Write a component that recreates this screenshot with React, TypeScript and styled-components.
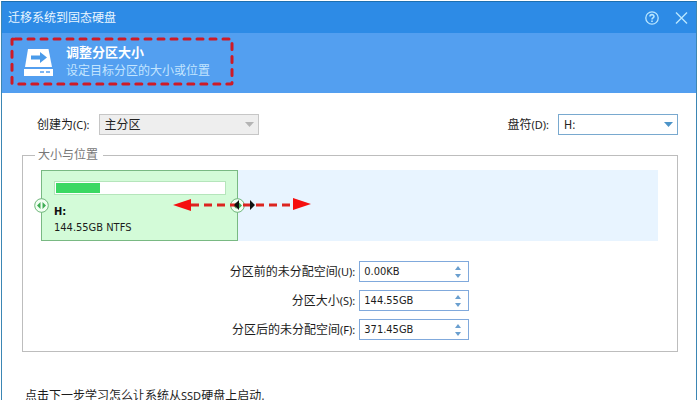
import React from "react";
import styled, { createGlobalStyle } from "styled-components";

const GlobalStyle = createGlobalStyle`
  *, *::before, *::after { box-sizing: border-box; }
  body {
    margin: 0;
    overflow: hidden;
    background: #fff;
    color: #1c1c1c;
    font: 12px/16px "DejaVu Sans Condensed", "Noto Sans CJK SC", sans-serif;
  }
  button, input, select { font: inherit; color: inherit; }
`;

const Dialog = styled.main`
  display: flex;
  flex-direction: column;
  min-height: 100vh;
  margin: 0 2px 0 1px;
  padding-top: 1px;
`;

const Frame = styled.div`
  flex: 1;
  border: 1px solid #3b86b4;
  border-top-color: #1d6fb0;
  border-bottom: 0;
`;

const TitleBar = styled.header`
  display: flex;
  align-items: center;
  justify-content: space-between;
  height: 31px;
  padding: 0 8px 0 6px;
  background: #2d8be6;
  color: #e8f5ff;
`;

const Title = styled.h1`
  margin: 0;
  font-size: 12px;
  font-weight: 400;
`;

const WindowActions = styled.div`
  display: flex;
  gap: 16px;
`;

const IconButton = styled.button`
  display: flex;
  padding: 0;
  border: 0;
  background: none;
  color: #b9e6ff;
`;

const StepButton = styled(IconButton)`
  color: #6a9fcf;
`;

const Banner = styled.section`
  display: flex;
  height: 60px;
  padding: 4px 8px;
  background: #539ff0;
  color: #fff;
`;

const Callout = styled.div`
  position: relative;
  display: flex;
  align-items: center;
  gap: 13px;
  width: 224px;
  height: 50px;
  padding-left: 14px;
`;

const CalloutOutline = styled.svg`
  position: absolute;
  inset: 0;
  pointer-events: none;
`;

const BannerTitle = styled.h2`
  margin: 0;
  font-size: 13px;
  line-height: 18px;
  font-weight: 700;
`;

const BannerText = styled.p`
  margin: 0;
  line-height: 18px;
  color: #c3e5ff;
`;

const Content = styled.div`
  padding: 21px 18px 0 20px;
`;

const Options = styled.div`
  display: flex;
  justify-content: space-between;
  padding-left: 15px;
`;

const Option = styled.div`
  display: flex;
  align-items: center;
  gap: 9px;
`;

const Latin = styled.span`
  font-family: "Noto Sans", sans-serif;
  font-size: 11px;
`;

const SelectBox = styled.div<{ $muted?: boolean }>`
  display: grid;
  align-items: center;
  width: ${(p) => (p.$muted ? "160px" : "120px")};
  color: ${(p) => (p.$muted ? "#b4b4b4" : "#4c94c8")};
  > * { grid-area: 1 / 1; }
  > svg { justify-self: end; margin-right: 5px; pointer-events: none; }
`;

const Select = styled.select<{ $muted?: boolean }>`
  appearance: none;
  height: 21px;
  width: 100%;
  padding: 0 20px 0 5px;
  border: 1px solid ${(p) => (p.$muted ? "#c6c6c6" : "#79a9cf")};
  border-radius: 0;
  background: ${(p) => (p.$muted ? "#eee" : "#fff")};
  color: #222;
  opacity: 1;
`;

const Group = styled.fieldset`
  min-width: 0;
  margin: 12px 0 0;
  padding: 7px 19px 11px 18px;
  border: 1px solid #bdbdbd;
`;

const Legend = styled.legend`
  margin-left: -6px;
  padding: 0 5px 0 3px;
  color: #777;
`;

const Disk = styled.div`
  position: relative;
  height: 71px;
  background: #e8f4ff;
`;

const Partition = styled.div`
  position: relative;
  width: 32%;
  height: 100%;
  padding: 10px 11px 0 12px;
  border: 1px solid #79b983;
  background: #d3fbd8;
  font-size: 11px;
`;

const Usage = styled.div`
  height: 14px;
  padding: 1px;
  border: 1px solid #b5e5bb;
  background: #fff;
`;

const Used = styled.div`
  width: 26%;
  height: 100%;
  background: #3bd863;
`;

const DriveName = styled.strong`
  display: block;
  margin-top: 9px;
  color: #111;
`;

const Handle = styled.button<{ $side: "left" | "right" }>`
  position: absolute;
  top: 27px;
  ${(p) => p.$side}: -8px;
  display: flex;
  padding: 0;
  border: 0;
  background: none;
`;

const ResizeHint = styled.svg`
  position: absolute;
  top: 26px;
  right: -74px;
  z-index: 1;
  pointer-events: none;
`;

const Sizes = styled.div`
  display: grid;
  grid-template-columns: auto 110px;
  justify-content: center;
  align-items: center;
  column-gap: 4px;
  row-gap: 8px;
  margin-top: 20px;
`;

const SizeLabel = styled.label`
  text-align: right;
`;

const Spin = styled.div`
  display: flex;
  height: 21px;
  border: 1px solid #80a9dc;
  background: #fff;
`;

const SpinInput = styled.input`
  flex: 1;
  min-width: 0;
  padding: 0 0 0 4px;
  border: 0;
  outline: 0;
  background: none;
  font-size: 11px;
`;

const SpinButtons = styled.div`
  display: flex;
  flex-direction: column;
  justify-content: center;
  gap: 4px;
  padding-right: 7px;
`;

const Note = styled.p`
  margin: 36px 0 0 3px;
  white-space: nowrap;
`;

const Triangle = ({ up, w = 6, h = 4 }: { up?: boolean; w?: number; h?: number }) => (
  <svg width={w} height={h} viewBox="0 0 10 10" preserveAspectRatio="none" fill="currentColor" aria-hidden="true">
    <path d={up ? "M0 10L5 0L10 10Z" : "M0 0H10L5 10Z"} />
  </svg>
);

const DiskIcon = () => (
  <svg width="29" height="27" viewBox="0 0 29 27" aria-hidden="true">
    <path d="M4 0H24.500L28 18H1Z" fill="#fff" />
    <path d="M7 6.500H16V3L23 8.500L16 14V10.500H7Z" fill="#4a9bea" />
    <path d="M0 20H29V27H0Z" fill="#fff" />
    <path d="M16 23H20M22 23H26" stroke="#539ff0" strokeWidth="1.500" />
  </svg>
);

const HelpIcon = () => (
  <svg width="14" height="14" viewBox="0 0 14 14" fill="none" stroke="currentColor" strokeWidth="1.300" aria-hidden="true">
    <circle cx="7" cy="7" r="6.200" />
    <path d="M5 5.600C5 3 9 3 9 5.500C9 7 7 6.800 7 8.400" strokeWidth="1.600" />
    <path d="M7 9.500V11" strokeWidth="1.600" />
  </svg>
);

const CloseIcon = () => (
  <svg width="13" height="14" viewBox="0 0 13 14" fill="none" stroke="currentColor" strokeWidth="1.400" aria-hidden="true">
    <path d="M1 1.500L12 12.500M12 1.500L1 12.500" />
  </svg>
);

const HandleIcon = () => (
  <svg width="15" height="15" viewBox="0 0 15 15" aria-hidden="true">
    <circle cx="7.500" cy="7.500" r="6.800" fill="#f2fff3" stroke="#6eb67a" />
    <path d="M6.500 4V11L3 7.500ZM8.500 4V11L12 7.500Z" fill="#3fae55" />
  </svg>
);

const sizes = [
  { id: "before", label: "分区前的未分配空间", mnemonic: "(U):", value: "0.00KB" },
  { id: "size", label: "分区大小", mnemonic: "(S):", value: "144.55GB" },
  { id: "after", label: "分区后的未分配空间", mnemonic: "(F):", value: "371.45GB" },
];

export default function App() {
  return (
    <Dialog>
      <GlobalStyle />
      <Frame>
        <TitleBar>
          <Title>迁移系统到固态硬盘</Title>
          <WindowActions>
            <IconButton aria-label="帮助"><HelpIcon /></IconButton>
            <IconButton aria-label="关闭"><CloseIcon /></IconButton>
          </WindowActions>
        </TitleBar>
        <Banner>
          <Callout>
            <CalloutOutline width="224" height="50" aria-hidden="true">
              <rect x="2" y="2" width="220" height="45" rx="1" fill="none" stroke="#cf1a26" strokeWidth="3" strokeDasharray="6 7" strokeDashoffset="-2" strokeLinecap="round" />
            </CalloutOutline>
            <DiskIcon />
            <div>
              <BannerTitle>调整分区大小</BannerTitle>
              <BannerText>设定目标分区的大小或位置</BannerText>
            </div>
          </Callout>
        </Banner>
        <Content>
          <Options>
            <Option>
              <label htmlFor="kind">创建为<Latin>(C):</Latin></label>
              <SelectBox $muted>
                <Select id="kind" $muted disabled defaultValue="primary">
                  <option value="primary">主分区</option>
                </Select>
                <Triangle w={9} h={5} />
              </SelectBox>
            </Option>
            <Option>
              <label htmlFor="letter">盘符<Latin>(D):</Latin></label>
              <SelectBox>
                <Select id="letter" defaultValue="H">
                  <option value="H">H:</option>
                </Select>
                <Triangle w={9} h={5} />
              </SelectBox>
            </Option>
          </Options>
          <Group>
            <Legend>大小与位置</Legend>
            <Disk>
              <Partition>
                <Usage><Used /></Usage>
                <DriveName>H:</DriveName>
                <div>144.55GB NTFS</div>
                <Handle $side="left" aria-label="调整起始位置"><HandleIcon /></Handle>
                <Handle $side="right" aria-label="调整结束位置"><HandleIcon /></Handle>
                <ResizeHint width="138" height="15" viewBox="0 0 138 15" aria-hidden="true">
                  <path d="M18 8H120" stroke="#dc2420" strokeWidth="3" strokeDasharray="8 5" />
                  <path d="M0 8L18 2V14ZM138 7L120 1V13Z" fill="#f50f0f" />
                  <path d="M61 8L66 3V13ZM82 8L77 3V13Z" fill="#111" />
                </ResizeHint>
              </Partition>
            </Disk>
            <Sizes>
              {sizes.map((s) => (
                <React.Fragment key={s.id}>
                  <SizeLabel htmlFor={s.id}>{s.label}<Latin>{s.mnemonic}</Latin></SizeLabel>
                  <Spin>
                    <SpinInput id={s.id} defaultValue={s.value} />
                    <SpinButtons>
                      <StepButton aria-label="增加"><Triangle up /></StepButton>
                      <StepButton aria-label="减少"><Triangle /></StepButton>
                    </SpinButtons>
                  </Spin>
                </React.Fragment>
              ))}
            </Sizes>
          </Group>
          <Note>点击下一步学习怎么让系统从<Latin>SSD</Latin>硬盘上启动.</Note>
        </Content>
      </Frame>
    </Dialog>
  );
}
